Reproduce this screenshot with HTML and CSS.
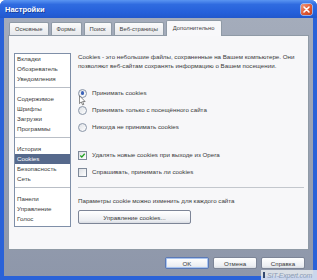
FILE: index.html
```html
<!DOCTYPE html>
<html>
<head>
    <link rel="stylesheet" href="styles.css">
</head>
<body>
    <div class="window">
        <div class="titlebar">
            <span class="title">Настройки</span>
            <span class="close">
                <svg viewBox="0 0 11 11" width="11" height="11">
                    <path d="M3,3 L8,8 M8,3 L3,8" stroke="#fff" stroke-width="1.6" stroke-linecap="round"/>
                </svg>
            </span>
        </div>
        <div class="body">
            <div class="tabs">
                <div class="tab">Основные</div>
                <div class="tab">Формы</div>
                <div class="tab">Поиск</div>
                <div class="tab">Веб-страницы</div>
                <div class="tab active">Дополнительно</div>
            </div>
            <div class="panel">
                <div class="nav">
                    <ul class="group">
                        <li>Вкладки</li>
                        <li>Обозреватель</li>
                        <li>Уведомления</li>
                    </ul>
                    <ul class="group">
                        <li>Содержимое</li>
                        <li>Шрифты</li>
                        <li>Загрузки</li>
                        <li>Программы</li>
                    </ul>
                    <ul class="group">
                        <li>История</li>
                        <li class="selected">Cookies</li>
                        <li>Безопасность</li>
                        <li>Сеть</li>
                    </ul>
                    <ul class="group">
                        <li>Панели</li>
                        <li>Управление</li>
                        <li>Голос</li>
                    </ul>
                </div>
                <div class="content">
                    <p class="intro">Cookies - это небольшие файлы, сохраненные на Вашем компьютере. Они позволяют веб-сайтам сохранять информацию о Вашем посещении.</p>
                    <div class="radios">
                        <div class="opt"><span class="radio on"></span>Принимать cookies</div>
                        <div class="opt"><span class="radio"></span>Принимать только с посещённого сайта</div>
                        <div class="opt"><span class="radio"></span>Никогда не принимать cookies</div>
                    </div>
                    <div class="checks">
                        <div class="opt"><span class="check on">
                            <svg viewBox="0 0 8 8" width="8" height="8"><path d="M1.5,4 L3.2,5.8 L6.5,2" fill="none" stroke="#21a121" stroke-width="1.5"/></svg>
                        </span>Удалять новые cookies при выходе из Opera</div>
                        <div class="opt"><span class="check"></span>Спрашивать, принимать ли cookies</div>
                    </div>
                    <div class="divider"></div>
                    <p class="hint">Параметры cookie можно изменить для каждого сайта</p>
                    <button class="btn manage">Управление cookies...</button>
                </div>
            </div>
            <div class="footer">
                <button class="btn default">OK</button>
                <button class="btn">Отмена</button>
                <button class="btn">Справка</button>
            </div>
        </div>
        <div class="watermark"><span class="mark"></span>SIT-Expert.com</div>
        <svg class="cursor" viewBox="0 0 8 12" width="7" height="11">
            <path d="M0.5,0.5 L0.5,9.5 L2.6,7.6 L4.1,11 L5.5,10.4 L4.1,7.2 L7,7.2 Z" fill="#fff" stroke="#555" stroke-width="0.8"/>
        </svg>
    </div>
</body>
</html>
```

FILE: styles.css
```css
body {
    margin: 0;
    width: 317px;
    height: 280px;
    overflow: hidden;
    font-family: 'Liberation Sans', Arial, sans-serif;
    font-size: 6.2px;
    color: #3a3a3a;
}

.window {
    position: relative;
    width: 317px;
    height: 280px;
    display: flex;
    flex-direction: column;
    background: #2a62d8;
    border-radius: 6px 6px 0 0;
}

.titlebar {
    height: 18px;
    display: flex;
    align-items: center;
    justify-content: space-between;
    padding: 0 5px 0 5px;
    background: linear-gradient(to bottom, #5a95f2 0%, #2f6be0 25%, #2560da 70%, #2258cc 100%);
    border-radius: 6px 6px 0 0;
}

.title {
    color: #fff;
    font-weight: bold;
    font-size: 7.5px;
    text-shadow: 1px 1px 0 rgba(0,0,40,0.4);
}

.close {
    width: 11px;
    height: 11px;
    display: flex;
    border-radius: 2px;
    background: linear-gradient(135deg, #f19a7c, #df5a34 55%, #c9421d);
    box-shadow: 0 0 0 0.5px #fff;
}

.body {
    flex: 1;
    display: flex;
    flex-direction: column;
    margin: 0 4px 4px 4px;
    padding: 3px 4px 0 4px;
    background: linear-gradient(to bottom, #a4acbb, #8e97aa);
}

.tabs {
    display: flex;
    align-items: flex-end;
    gap: 2px;
    height: 14px;
    margin-left: 1px;
    position: relative;
    z-index: 1;
}

.tab {
    height: 12px;
    line-height: 12px;
    padding: 0 5px;
    font-size: 5.8px;
    background: linear-gradient(to bottom, #fbfbfb, #e6e8ec);
    border: 1px solid #8f9aa6;
    border-bottom: none;
    border-radius: 2px 2px 0 0;
    color: #444;
}

.tab.active {
    height: 15px;
    line-height: 14px;
    margin: 0 -1px -1px 0;
    padding: 0 6px;
    background: #f8f8fa;
}

.panel {
    flex: 1;
    display: flex;
    gap: 7px;
    padding: 17px 4px 0 5px;
    background: #f7f7f9;
    border: 1px solid #8f9aa6;
}

.nav {
    width: 55px;
    height: 172px;
    background: #fff;
    border: 1px solid #7f8fa8;
}

.group {
    list-style: none;
    margin: 0;
    padding: 0;
}

.group + .group {
    border-top: 1px solid #b9bec6;
    margin-top: 3px;
    padding-top: 6px;
}

.group li {
    height: 10px;
    line-height: 10px;
    padding-left: 2px;
}

.group li.selected {
    background: #56698c;
    color: #fff;
}

.content {
    flex: 1;
    display: flex;
    flex-direction: column;
    align-items: flex-start;
}

.intro {
    margin: 0;
    line-height: 8.5px;
}

.radios {
    margin-top: 19px;
    display: flex;
    flex-direction: column;
    gap: 9px;
}

.checks {
    margin-top: 20px;
    display: flex;
    flex-direction: column;
    gap: 9px;
}

.opt {
    display: flex;
    align-items: center;
    gap: 5px;
    height: 8px;
    line-height: 8px;
}

.radio {
    width: 7px;
    height: 7px;
    border: 0.5px solid #8a96a8;
    border-radius: 50%;
    background: linear-gradient(135deg, #dcdfe4, #fff);
    display: flex;
    align-items: center;
    justify-content: center;
}

.radio.on::after {
    content: '';
    width: 3.5px;
    height: 3.5px;
    border-radius: 50%;
    background: #3b62b8;
}

.check {
    width: 7px;
    height: 7px;
    border: 0.5px solid #7f8a9a;
    background: linear-gradient(135deg, #dcdfe4, #fff);
    display: flex;
}

.check.on svg {
    width: 7px;
    height: 7px;
}

.divider {
    align-self: stretch;
    height: 1px;
    background: #c3c7cd;
    margin-top: 11px;
}

.hint {
    margin: 9px 0 0 0;
    line-height: 8px;
}

.btn {
    font-family: 'Liberation Sans', Arial, sans-serif;
    font-size: 6.2px;
    color: #3a3a3a;
    height: 13px;
    padding: 0;
    background: linear-gradient(to bottom, #ffffff, #eceef2 80%, #d8dbe2);
    border: 1px solid #7d8597;
    border-radius: 2px;
}

.manage {
    width: 113px;
    height: 14px;
    margin-top: 5px;
}

.footer {
    height: 26px;
    display: flex;
    align-items: center;
    justify-content: flex-end;
    gap: 4px;
    padding-right: 4px;
}

.footer .btn {
    width: 44px;
    height: 12px;
}

.btn.default {
    border-color: #5b79b5;
    box-shadow: inset 0 0 0 1px #a9c4f0;
}

.watermark {
    position: absolute;
    right: 0;
    bottom: 0;
    width: 56px;
    height: 10px;
    display: flex;
    align-items: center;
    gap: 2px;
    padding-left: 2px;
    background: rgba(232,235,240,0.85);
    color: #8a9bb6;
    font-size: 7px;
    font-style: italic;
    letter-spacing: -0.2px;
    box-sizing: border-box;
    white-space: nowrap;
}

.mark {
    width: 2px;
    height: 6px;
    background: #33496e;
}

.cursor {
    position: absolute;
    left: 79px;
    top: 95px;
}
```
